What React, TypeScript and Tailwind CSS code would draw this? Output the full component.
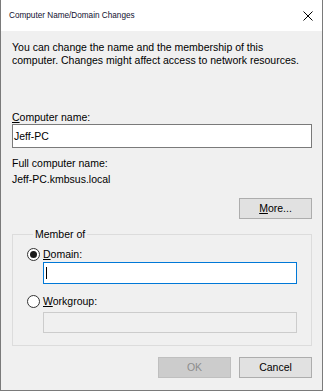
import type { ReactNode } from 'react';

function Radio({ checked }: { checked?: boolean }) {
  return (
    <span className="w-[13px] h-[13px] rounded-full border border-[#333333] bg-white flex items-center justify-center shrink-0">
      {checked && <span className="w-[7px] h-[7px] rounded-full bg-[#1a1a1a]" />}
    </span>
  );
}

function Button({ children, disabled }: { children: ReactNode; disabled?: boolean }) {
  return (
    <button
      type="button"
      disabled={disabled}
      className={
        disabled
          ? 'w-[73px] h-[21px] bg-[#cccccc] border border-[#bfbfbf] text-[#8c8c8c] flex items-center justify-center'
          : 'w-[73px] h-[21px] bg-[#e1e1e1] border border-[#adadad] text-black flex items-center justify-center'
      }
    >
      {children}
    </button>
  );
}

export default function App() {
  return (
    <div className="w-[323px] h-[391px] bg-[#f0f0f0] border-x border-b border-[#7a7a7a] flex flex-col font-['Liberation_Sans',Arial,sans-serif] text-[10.5px] leading-[13px] text-black overflow-hidden">
      <div className="h-[31px] bg-white flex items-center justify-between pl-[8px] pr-[9px] shrink-0">
        <span className="text-[8.2px] text-[#101030]">Computer Name/Domain Changes</span>
        <svg width="10" height="10" viewBox="0 0 10 10" className="block">
          <path d="M0.5 0.5 L9.5 9.5 M9.5 0.5 L0.5 9.5" stroke="#000" strokeWidth="1" fill="none" />
        </svg>
      </div>

      <div className="flex flex-col pl-[11px] pr-[10px]">
        <p className="mt-[10px]">
          You can change the name and the membership of this computer. Changes might affect access to network resources.
        </p>

        <label className="mt-[44px]">
          <span className="underline">C</span>omputer name:
        </label>
        <div className="h-[24px] border border-[#7a7a7a] bg-white flex items-center pl-[1px]">Jeff-PC</div>

        <p className="mt-[9px]">Full computer name:</p>
        <p className="mt-[3px]">Jeff-PC.kmbsus.local</p>

        <div className="mt-[12px] flex justify-end">
          <Button>
            <span className="underline">M</span>ore...
          </Button>
        </div>

        <fieldset className="mt-[9px] border border-[#dcdcdc] pl-[14px] pr-[14px] pt-[6px] pb-[12px]">
          <legend className="ml-[6px] px-[2px]">Member of</legend>
          <div className="flex items-center gap-[3px] h-[14px]">
            <Radio checked />
            <span>
              <span className="underline">D</span>omain:
            </span>
          </div>
          <div className="mt-[1px] ml-[16px] h-[22px] border border-[#0078d7] bg-white flex items-center pl-[2px]">
            <span className="w-px h-[12px] bg-black" />
          </div>
          <div className="mt-[10px] flex items-center gap-[3px] h-[14px]">
            <Radio />
            <span>
              <span className="underline">W</span>orkgroup:
            </span>
          </div>
          <div className="mt-[4px] ml-[16px] h-[21px] border border-[#cccccc] bg-[#f0f0f0]" />
        </fieldset>

        <div className="mt-[11px] flex justify-end gap-[8px]">
          <Button disabled>OK</Button>
          <Button>Cancel</Button>
        </div>
      </div>
    </div>
  );
}
